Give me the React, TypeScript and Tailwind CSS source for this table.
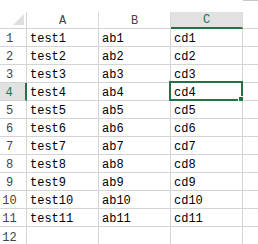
const rows = Array.from({ length: 11 }, (_, i) => ({
  n: i + 1,
  a: `test${i + 1}`,
  b: `ab${i + 1}`,
  c: `cd${i + 1}`,
}));

export default function App() {
  return (
    <div className="relative w-[258px] h-[244px] overflow-hidden bg-white font-mono text-[12px]">
      {/* top strip */}
      <div className="h-[12px] flex justify-end">
        <div className="w-[15px] h-px bg-[#c8c8c8]" />
      </div>

      <div className="grid grid-cols-[27px_72px_72px_72px_1fr]">
        {/* header row */}
        <div className="h-[17px] border-r border-b border-[#d4d4d4] relative">
          <div className="absolute right-[2px] bottom-[3px] w-0 h-0 border-l-[11px] border-l-transparent border-b-[11px] border-b-[#dfdfdf]" />
        </div>
        <div className="h-[17px] border-r border-b border-[#dadada] border-b-[#d4d4d4] flex items-end justify-center text-[#444] leading-[14px]">A</div>
        <div className="h-[17px] border-r border-b border-[#dadada] border-b-[#d4d4d4] flex items-end justify-center text-[#444] leading-[14px]">B</div>
        <div className="h-[17px] border-r border-[#dadada] border-b-2 border-b-[#217346] bg-[#e1e1e1] flex items-end justify-center text-[#217346] leading-[14px]">C</div>
        <div className="h-[17px] border-b border-[#d4d4d4]" />

        {rows.map((r) => {
          const sel = r.n === 4;
          return (
            <div key={r.n} className="contents">
              <div
                className={`h-[18px] border-b border-[#d4d4d4] flex items-end justify-center pr-[7px] leading-[14px] ${
                  sel ? 'bg-[#e1e1e1] text-[#217346] border-r-2 border-r-[#217346]' : 'text-[#444] border-r border-r-[#d4d4d4]'
                }`}
              >
                {r.n}
              </div>
              <div className="h-[18px] border-r border-b border-[#d4d4d4] flex items-end pl-[3px] leading-[14px] text-black">{r.a}</div>
              <div className="h-[18px] border-r border-b border-[#d4d4d4] flex items-end pl-[3px] leading-[14px] text-black">{r.b}</div>
              <div className="h-[18px] border-r border-b border-[#d4d4d4] flex items-end pl-[3px] leading-[14px] text-black relative">
                {r.c}
                {sel && (
                  <div className="absolute -left-[2px] -top-[2px] -right-px -bottom-px border-2 border-[#217346]">
                    <div className="absolute -right-[3px] -bottom-[3px] w-[6px] h-[6px] bg-[#217346] border border-white" />
                  </div>
                )}
              </div>
              <div className="h-[18px] border-b border-[#d4d4d4]" />
            </div>
          );
        })}

        {/* row 12 */}
        <div className="h-[18px] border-r border-[#d4d4d4] flex items-end justify-center pr-[7px] leading-[14px] text-[#444]">12</div>
        <div className="h-[18px] border-r border-[#d4d4d4]" />
        <div className="h-[18px] border-r border-[#d4d4d4]" />
        <div className="h-[18px] border-r border-[#d4d4d4]" />
        <div className="h-[18px]" />
      </div>
    </div>
  );
}
